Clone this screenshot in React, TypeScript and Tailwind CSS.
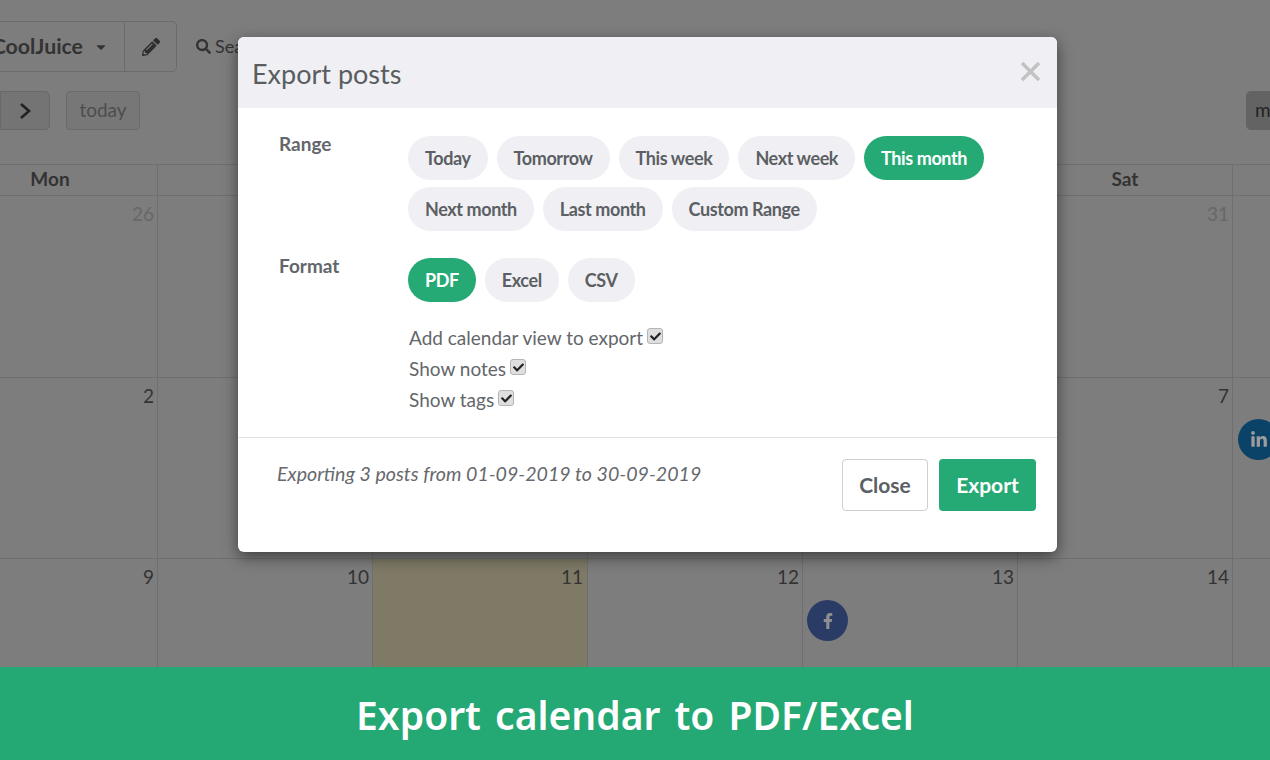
import { FaCaretDown, FaCheck, FaFacebookF, FaLinkedinIn, FaPencilAlt, FaSearch } from "react-icons/fa";

const weekOne = [
	{ day: "26", faded: true },
	{ day: "" },
	{ day: "" },
	{ day: "" },
	{ day: "" },
	{ day: "31", faded: true },
	{ day: "" },
];
const weekTwo = [{ day: "2" }, { day: "" }, { day: "" }, { day: "" }, { day: "" }, { day: "7" }, { day: "" }];
const weekThree = [{ day: "9" }, { day: "10" }, { day: "11" }, { day: "12" }, { day: "13" }, { day: "14" }, { day: "" }];
const headers = ["Mon", "", "", "", "", "Sat", ""];

function Pill({ label, active }: { label: string; active?: boolean }) {
	return (
		<span
			className={
				active
					? "h-11 px-[17px] rounded-full flex items-center text-[18px] font-bold tracking-[-0.4px] bg-[#25aa75] text-white"
					: "h-11 px-[17px] rounded-full flex items-center text-[18px] font-bold tracking-[-0.4px] bg-[#f0f0f4] text-[#5c5f63]"
			}
		>
			{label}
		</span>
	);
}

function CheckRow({ label }: { label: string }) {
	return (
		<div className="h-[31px] pl-px flex items-center text-[19px] text-[#63666a]">
			<span>{label}</span>
			<span className="ml-[4px] mb-[5px] w-4 h-4 rounded-[3px] bg-[#dfdfdf] border border-[#b5b5b5] flex items-center justify-center text-[#222]">
				<FaCheck size={11} />
			</span>
		</div>
	);
}

function Week({ cells, height }: { cells: { day: string; faded?: boolean }[]; height: string }) {
	return (
		<div className={`grid grid-cols-[repeat(7,215px)] border-b border-[#6f6f6f] ${height}`}>
			{cells.map((c, i) => (
				<div
					key={i}
					className={
						c.day === "11"
							? "border-r border-[#6f6f6f] bg-[#7e7a66] text-right pr-[4px] pt-[4px] text-[19px] text-[#333]"
							: c.faded
								? "border-r border-[#6f6f6f] text-right pr-[3px] pt-[4px] text-[19px] text-[#676767]"
								: "border-r border-[#6f6f6f] text-right pr-[3px] pt-[4px] text-[19px] text-[#333]"
					}
				>
					{c.day}
				</div>
			))}
		</div>
	);
}

export default function App() {
	return (
		<div className="relative w-[1270px] h-[760px] overflow-hidden bg-[#7d7d7d] font-['Lato','Open_Sans',sans-serif]">
			<div className="h-[667px] overflow-hidden">
				<div className="pt-[21px] flex items-center h-[72px]">
					<div className="ml-[-20px] w-[197px] h-[51px] flex border border-[#6b6b6b] rounded-[5px]">
						<div className="w-[144px] flex items-center justify-end pr-[16px] gap-[11px] border-r border-[#6b6b6b] text-[21.3px] font-bold text-[#333]">
							<span>CoolJuice</span>
							<FaCaretDown size={14} />
						</div>
						<div className="flex-1 flex items-center justify-center text-[#2e2e2e]">
							<FaPencilAlt size={18} />
						</div>
					</div>
					<div className="ml-[19px] flex items-center gap-[4px] text-[18px] text-[#333]">
						<FaSearch size={15} />
						<span>Search</span>
					</div>
				</div>
				<div className="mt-[19px] h-[39px] flex justify-between">
					<div className="flex items-center">
						<div className="w-[50px] h-[39px] pr-[18px] bg-[#747474] border border-[#696969] rounded-r-[5px] flex items-center justify-end text-[#222]">
							<svg width="12" height="18" viewBox="0 0 12 18">
								<path d="M2 2 L10 9 L2 16" stroke="currentColor" strokeWidth="2.6" fill="none" />
							</svg>
						</div>
						<div className="ml-4 w-[74px] h-[39px] bg-[#777] border border-[#6b6b6b] rounded-[4px] flex items-center justify-center text-[19px] text-[#4d4d4d]">
							today
						</div>
					</div>
					<div className="w-6 h-[39px] pl-[9px] bg-[#636363] rounded-l-[5px] flex items-center text-[19px] text-[#222] overflow-hidden">
						m
					</div>
				</div>
				<div className="mt-[34px] ml-[-57px] w-[1505px] border-t border-[#6f6f6f]">
					<div className="grid grid-cols-[repeat(7,215px)] h-[31px] border-b border-[#6f6f6f]">
						{headers.map((h, i) => (
							<div
								key={i}
								className="pb-[2px] border-r border-[#6f6f6f] flex items-center justify-center text-[19px] font-bold text-[#333]"
							>
								{h}
							</div>
						))}
					</div>
					<Week cells={weekOne} height="h-[182px]" />
					<Week cells={weekTwo} height="h-[181px]" />
					<Week cells={weekThree} height="h-[120px]" />
				</div>
			</div>

			<div className="absolute left-[807px] top-[600px] w-[41px] h-[41px] rounded-full bg-[#2a3c66] flex items-center justify-center text-[#8f8f8f]">
				<FaFacebookF size={16} />
			</div>
			<div className="absolute left-[1238px] top-[419px] w-[41px] h-[41px] rounded-full bg-[#0a4268] flex items-center justify-center text-[#9c9c9c]">
				<FaLinkedinIn size={18} />
			</div>

			<div className="absolute left-[238px] top-[37px] w-[819px] h-[515px] bg-white rounded-[6px] overflow-hidden shadow-[0_5px_15px_rgba(0,0,0,0.5)]">
				<div className="h-[71px] bg-[#f0f0f4] pl-[14px] pr-[16px] pt-[3px] flex items-center justify-between">
					<span className="text-[27px] text-[#5a5d60]">Export posts</span>
					<svg width="21" height="21" viewBox="0 0 21 21" className="mb-[6px] text-[#c2c2c2]">
						<path d="M2 2 L19 19 M19 2 L2 19" stroke="currentColor" strokeWidth="3.5" fill="none" />
					</svg>
				</div>
				<div className="h-[329px] pt-[28px] pl-[41px] grid grid-cols-[129px_1fr] content-start">
					<div className="leading-[16px] text-[19px] font-bold text-[#63666a]">Range</div>
					<div>
						<div className="flex gap-[9px]">
							<Pill label="Today" />
							<Pill label="Tomorrow" />
							<Pill label="This week" />
							<Pill label="Next week" />
							<Pill label="This month" active />
						</div>
						<div className="mt-[7px] flex gap-[9px]">
							<Pill label="Next month" />
							<Pill label="Last month" />
							<Pill label="Custom Range" />
						</div>
					</div>
					<div className="mt-[27px] leading-[16px] text-[19px] font-bold text-[#63666a]">Format</div>
					<div className="mt-[27px] flex gap-[9px]">
						<Pill label="PDF" active />
						<Pill label="Excel" />
						<Pill label="CSV" />
					</div>
					<div className="col-start-2 mt-[21px]">
						<CheckRow label="Add calendar view to export" />
						<CheckRow label="Show notes" />
						<CheckRow label="Show tags" />
					</div>
				</div>
				<div className="border-t border-[#e2e2e2] pt-[21px] pl-[39px] pr-[21px] flex justify-between items-start">
					<span className="italic text-[19.6px] text-[#66696d]">Exporting 3 posts from 01-09-2019 to 30-09-2019</span>
					<div className="flex gap-[11px]">
						<div className="w-[86px] h-[52px] rounded-[4px] border border-[#cfcfcf] flex items-center justify-center text-[21px] font-bold text-[#5c5f63]">
							Close
						</div>
						<div className="w-[97px] h-[52px] rounded-[4px] bg-[#25aa75] flex items-center justify-center text-[21px] font-bold text-white">
							Export
						</div>
					</div>
				</div>
			</div>

			<div className="absolute left-0 right-0 bottom-0 h-[93px] pt-[3px] bg-[#24a874] flex items-center justify-center text-white text-[39px] font-semibold font-['Noto_Sans',sans-serif] [word-spacing:4px]">
				Export calendar to PDF/Excel
			</div>
		</div>
	);
}
